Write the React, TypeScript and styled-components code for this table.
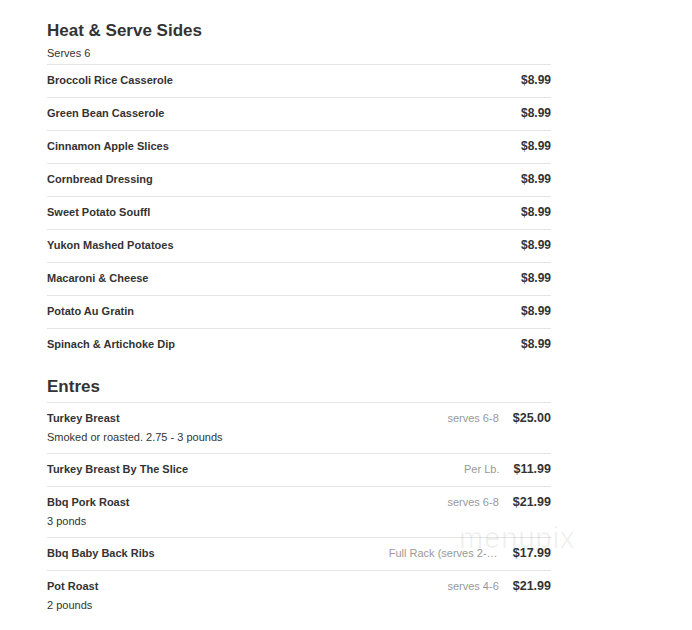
import React from "react";
import styled, { createGlobalStyle } from "styled-components";

const GlobalStyle = createGlobalStyle`
    body {
        margin: 0;
        background: #fff;
        font-family: "Liberation Sans", Arial, sans-serif;
        color: #333;
    }
`

const Page = styled.div`
    position: relative;
    width: 504px;
    padding: 21px 0 0 47px;
`

const Section = styled.section`
    & + & {
        margin-top: 16px;
    }
`

const Title = styled.h2`
    margin: 0 0 5px;
    font-size: 17px;
    line-height: 20px;
    font-weight: bold;
    color: #333;
`

const Subtitle = styled.div`
    font-size: 11px;
    line-height: 14px;
    margin-bottom: 4px;
`

const Row = styled.div`
    display: flex;
    align-items: flex-start;
    border-top: 1px solid #e4e4e4;
    padding: 8px 0 10px;
`

const Info = styled.div`
    flex: 1;
    min-width: 0;
`

const Name = styled.div`
    font-size: 11px;
    line-height: 14px;
    font-weight: bold;
    color: #333;
`

const Desc = styled.div`
    margin: 5px 0 -1px;
    font-size: 11px;
    line-height: 14px;
    color: #333;
`

const Note = styled.div`
    max-width: 110px;
    margin-right: 14px;
    font-size: 11px;
    line-height: 14px;
    color: #999;
    white-space: nowrap;
    overflow: hidden;
    text-overflow: ellipsis;
`

const Price = styled.div<{ $big?: boolean }>`
    font-size: ${p => p.$big ? '12.5px' : '12px'};
    line-height: 14px;
    font-weight: bold;
    color: #333;
    text-align: right;
`

const Watermark = styled.div`
    position: absolute;
    left: 459px;
    top: 522px;
    font-size: 29px;
    letter-spacing: 1px;
    color: rgba(0, 0, 0, 0.06);
    pointer-events: none;
`

interface Item {
    name: string,
    price: string,
    desc?: string,
    note?: string,
}

const sides: Item[] = [
    { name: 'Broccoli Rice Casserole', price: '$8.99' },
    { name: 'Green Bean Casserole', price: '$8.99' },
    { name: 'Cinnamon Apple Slices', price: '$8.99' },
    { name: 'Cornbread Dressing', price: '$8.99' },
    { name: 'Sweet Potato Souffl', price: '$8.99' },
    { name: 'Yukon Mashed Potatoes', price: '$8.99' },
    { name: 'Macaroni & Cheese', price: '$8.99' },
    { name: 'Potato Au Gratin', price: '$8.99' },
    { name: 'Spinach & Artichoke Dip', price: '$8.99' },
]

const entres: Item[] = [
    { name: 'Turkey Breast', desc: 'Smoked or roasted. 2.75 - 3 pounds', note: 'serves 6-8', price: '$25.00' },
    { name: 'Turkey Breast By The Slice', note: 'Per Lb.', price: '$11.99' },
    { name: 'Bbq Pork Roast', desc: '3 ponds', note: 'serves 6-8', price: '$21.99' },
    { name: 'Bbq Baby Back Ribs', note: 'Full Rack (serves 2-3 people)', price: '$17.99' },
    { name: 'Pot Roast', desc: '2 pounds', note: 'serves 4-6', price: '$21.99' },
]

function MenuRow({ item, big }: { item: Item, big?: boolean }) {
    return (
        <Row>
            <Info>
                <Name>{item.name}</Name>
                {item.desc && <Desc>{item.desc}</Desc>}
            </Info>
            {item.note && <Note title={item.note}>{item.note}</Note>}
            <Price $big={big}>{item.price}</Price>
        </Row>
    )
}

export default function App() {
    return (
        <>
            <GlobalStyle />
            <Page>
                <Section>
                    <Title>Heat &amp; Serve Sides</Title>
                    <Subtitle>Serves 6</Subtitle>
                    {sides.map(item => <MenuRow key={item.name} item={item} />)}
                </Section>
                <Section>
                    <Title>Entres</Title>
                    {entres.map(item => <MenuRow key={item.name} item={item} big />)}
                </Section>
                <Watermark>menupix</Watermark>
            </Page>
        </>
    )
}
